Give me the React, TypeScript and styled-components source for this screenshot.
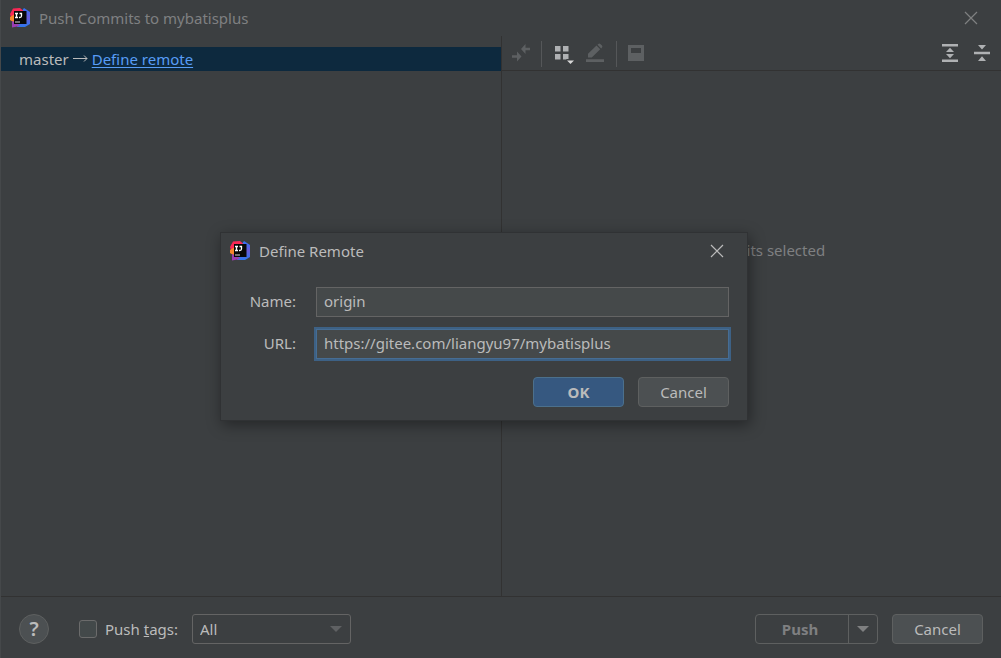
import React, { useId, useState } from "react";
import styled, { createGlobalStyle, css } from "styled-components";

const color = {
  panel: "#3c3f41",
  line: "#323232",
  text: "#bbbbbb",
  muted: "#7f8081",
  control: "#4c5052",
  controlBorder: "#5e6060",
  field: "#45494a",
  fieldBorder: "#646464",
  selection: "#0d293e",
  link: "#589df6",
  primary: "#365880",
  primaryBorder: "#4c708c",
  focus: "#3d6185",
};

const GlobalStyle = createGlobalStyle`
  *, *::before, *::after { box-sizing: border-box; }
  body {
    margin: 0;
    background: ${color.panel};
    color: ${color.text};
    font: 15px/20px "Noto Sans", "Open Sans", sans-serif;
  }
  button, input, select { font: inherit; color: inherit; margin: 0; }
  svg { display: block; }
`;

const Window = styled.main`
  position: relative;
  display: flex;
  flex-direction: column;
  min-height: 100vh;
  border-left: 1px solid #45484a;
`;

const TitleBar = styled.header<{ $active?: boolean }>`
  display: flex;
  align-items: center;
  gap: 8px;
  height: 36px;
  padding: 0 19px 0 8px;
  color: ${(p) => (p.$active ? color.text : color.muted)};
`;

const Title = styled.h1`
  flex: 1;
  margin: 0;
  font-size: 15px;
  font-weight: 400;
`;

const CloseButton = styled.button`
  display: flex;
  padding: 4px;
  border: 0;
  background: none;
  color: inherit;
`;

const Panels = styled.div`
  flex: 1;
  display: grid;
  grid-template-columns: 1fr 1fr;
  border-bottom: 1px solid ${color.line};
`;

const CommitTree = styled.section`
  padding-top: 11px;
`;

const BranchRow = styled.div`
  display: flex;
  align-items: center;
  gap: 4px;
  height: 24px;
  padding-left: 18px;
  background: ${color.selection};
`;

const RemoteLink = styled.a`
  color: ${color.link};
  text-underline-offset: 2px;
`;

const Details = styled.section`
  display: flex;
  flex-direction: column;
  border-left: 1px solid ${color.line};
`;

const Toolbar = styled.div`
  display: flex;
  align-items: center;
  gap: 10px;
  height: 35px;
  padding: 1px 7px 0;
  border-bottom: 1px solid ${color.line};
`;

const ToolButton = styled.button`
  display: flex;
  padding: 0;
  border: 0;
  background: none;
  color: #afb1b3;
  &:disabled { color: #5d6062; }
`;

const Divider = styled.span`
  width: 1px;
  height: 26px;
  background: #555759;
`;

const Spacer = styled.span`
  flex: 1;
`;

const EmptyText = styled.p`
  margin: 0;
  padding-top: 169px;
  text-align: center;
  color: ${color.muted};
`;

const Footer = styled.footer`
  display: flex;
  align-items: center;
  gap: 14px;
  height: 61px;
  padding: 2px 18px 0;
`;

const HelpButton = styled.button`
  width: 30px;
  height: 30px;
  margin-right: 16px;
  padding: 0;
  border: 1px solid ${color.controlBorder};
  border-radius: 50%;
  background: ${color.control};
  font-size: 20px;
  font-weight: 600;
`;

const TagsOption = styled.div`
  display: flex;
  align-items: center;
  gap: 8px;
`;

const CheckBox = styled.input`
  appearance: none;
  width: 18px;
  height: 18px;
  border: 1px solid #6b6b6b;
  border-radius: 3px;
  background: #43494a;
  &:checked { background: ${color.primary}; }
`;

const SelectBox = styled.div`
  display: grid;
  align-items: center;
  width: 159px;
  border: 1px solid ${color.fieldBorder};
  border-radius: 3px;
  color: #5f6163;
  > * { grid-area: 1 / 1; }
  > svg { justify-self: end; margin-right: 8px; pointer-events: none; }
`;

const Select = styled.select`
  appearance: none;
  width: 100%;
  height: 28px;
  padding: 0 7px;
  border: 0;
  background: transparent;
  color: ${color.text};
`;

const buttonShape = css`
  height: 30px;
  padding: 0;
  border: 1px solid ${color.controlBorder};
  border-radius: 4px;
`;

const Button = styled.button<{ $primary?: boolean }>`
  ${buttonShape}
  width: 91px;
  background: ${(p) => (p.$primary ? color.primary : color.control)};
  border-color: ${(p) => (p.$primary ? color.primaryBorder : color.controlBorder)};
  font-weight: ${(p) => (p.$primary ? 700 : 400)};
  outline: 0;
`;

const SplitButton = styled.div`
  ${buttonShape}
  display: flex;
  width: 123px;
  color: ${color.muted};
`;

const SplitPart = styled.button<{ $menu?: boolean }>`
  display: flex;
  align-items: center;
  justify-content: center;
  flex: ${(p) => (p.$menu ? "0 0 29px" : "1")};
  padding: 0 ${(p) => (p.$menu ? 0 : 4)}px 0 0;
  border: 0;
  border-left: ${(p) => (p.$menu ? `1px solid ${color.controlBorder}` : "0")};
  background: none;
  font-weight: 700;
`;

const Dialog = styled.form`
  position: absolute;
  top: 232px;
  left: 219px;
  width: 528px;
  border: 1px solid #303234;
  background: ${color.panel};
  box-shadow: 2px 4px 14px rgba(0, 0, 0, 0.4);
`;

const Fields = styled.div`
  display: grid;
  grid-template-columns: 75px 1fr;
  align-items: center;
  gap: 12px 20px;
  padding: 18px 18px 0 0;
`;

const FieldLabel = styled.label`
  padding-bottom: 2px;
  text-align: right;
`;

const TextField = styled.input<{ $focused?: boolean }>`
  width: 100%;
  height: 30px;
  padding: 0 7px 2px;
  border: 1px solid ${(p) => (p.$focused ? "#466d94" : color.fieldBorder)};
  background: ${color.field};
  outline: 0;
  box-shadow: ${(p) => (p.$focused ? `0 0 0 2px ${color.focus}` : "none")};
`;

const Actions = styled.div`
  display: flex;
  justify-content: flex-end;
  gap: 14px;
  padding: 18px 18px 13px;
`;

function IdeaLogo() {
  const id = useId();
  return (
    <svg width="22" height="22" viewBox="0 0 22 22" aria-hidden="true">
      <defs>
        <linearGradient id={id} x1="0" y1="0" x2="0" y2="1">
          <stop offset="0" stopColor="#2f72f6" />
          <stop offset=".5" stopColor="#6a5bd8" />
          <stop offset="1" stopColor="#2d78ee" />
        </linearGradient>
      </defs>
      <path d="M12 5 15 1l6 4v12l-5 3H8z" fill={`url(#${id})`} />
      <path d="M1 7 4 1.500l7-.5 3.500 3-3 4-9 4z" fill="#fb2755" />
      <path d="m1 10 4-2.500v8L1 13z" fill="#f7872b" />
      <path d="m3 14 5 2 3 3-8 1.500z" fill="#9b3db1" />
      <path d="M5 4h12.500v13H5z" fill="#080808" />
      <path d="M6 6.500h3M7.500 6.500v4M6 10.500h3M10.500 6.500H13M12.500 6v3q0 1.500-2 1.500h-.5" stroke="#fff" strokeWidth="1.300" fill="none" />
      <path d="M6 15h5" stroke="#aaa" strokeWidth="1.300" />
    </svg>
  );
}

function CloseIcon() {
  return (
    <svg width="14" height="14" viewBox="0 0 14 14" stroke="currentColor" strokeWidth="1.2">
      <path d="m1 1 12 12M13 1 1 13" />
    </svg>
  );
}

function DownArrow() {
  return (
    <svg width="12" height="8" viewBox="0 0 12 8" fill="currentColor" aria-hidden="true">
      <path d="M0 1h12L6 7z" />
    </svg>
  );
}

const toolShapes = {
  compare: <path d="M3 12.200h5V8.500l4.500 5-4.500 5v-3.700H3zM21 4.700h-4.500V1L12 6l4.500 5V7.300H21z" />,
  group: (
    <>
      <path d="M3 3h5.500v5.500H3zM11 3h5.500v5.500H11zM3 11h5.500v5.500H3zM11 11h5.500v5.500H11z" />
      <path d="M14 16h9l-4.500 6z" fill="#3c3f41" />
      <path d="M15 17.500h7L18.500 21z" fill="#d8d8d8" />
    </>
  ),
  edit: <path d="M2 16.300h18V19H2zM4 14.500v-3.700l8.500-8.300 3.700 3.700-8.400 8.300zM13.500 1.700l.8-.8q1-.7 2 0l1.700 1.700q.8 1 0 1.900l-.8.900z" />,
  preview: <path fillRule="evenodd" d="M1 2h16v16H1zM4 5v5h10V5z" />,
  expand: <path d="M2 1h16v2.600H2zM2 16.400h16V19H2zM10 4.700l4 4.300H6zM6 11h8l-4 4.300z" />,
  collapse: <path d="M2 8.700h16v2.600H2zM6 2h8l-4 4.600zM10 13.200l4 4.800H6z" />,
};

function Tool({ label, shape, disabled }: { label: string; shape: keyof typeof toolShapes; disabled?: boolean }) {
  return (
    <ToolButton type="button" aria-label={label} disabled={disabled}>
      <svg width="22" height="22" viewBox="0 0 22 22" fill="currentColor">{toolShapes[shape]}</svg>
    </ToolButton>
  );
}

export default function App() {
  const [name, setName] = useState("origin");
  const [url, setUrl] = useState("https://gitee.com/liangyu97/mybatisplus");

  return (
    <>
      <GlobalStyle />
      <Window>
        <TitleBar>
          <IdeaLogo />
          <Title>Push Commits to mybatisplus</Title>
          <CloseButton type="button" aria-label="Close"><CloseIcon /></CloseButton>
        </TitleBar>

        <Panels>
          <CommitTree>
            <BranchRow>
              <span>master</span>
              <svg width="15" height="10" viewBox="0 0 15 10" fill="none" stroke="#bbbbbb" aria-label="to">
                <path d="M0 4.500h14M11 1.500l3 3-3 3" />
              </svg>
              <RemoteLink href="#define-remote">Define remote</RemoteLink>
            </BranchRow>
          </CommitTree>
          <Details>
            <Toolbar>
              <Tool label="Show diff" shape="compare" disabled />
              <Divider />
              <Tool label="Group by" shape="group" />
              <Tool label="Edit source" shape="edit" disabled />
              <Divider />
              <Tool label="Preview" shape="preview" disabled />
              <Spacer />
              <Tool label="Expand all" shape="expand" />
              <Tool label="Collapse all" shape="collapse" />
            </Toolbar>
            <EmptyText>No commits selected</EmptyText>
          </Details>
        </Panels>

        <Footer>
          <HelpButton type="button" aria-label="Help">?</HelpButton>
          <TagsOption>
            <CheckBox id="push-tags" type="checkbox" />
            <label htmlFor="push-tags">Push <u>t</u>ags:</label>
          </TagsOption>
          <SelectBox>
            <Select aria-label="Tags to push" defaultValue="All">
              <option>All</option>
              <option>Current Branch</option>
            </Select>
            <DownArrow />
          </SelectBox>
          <Spacer />
          <SplitButton>
            <SplitPart type="button" disabled>Push</SplitPart>
            <SplitPart type="button" $menu aria-label="More push options"><DownArrow /></SplitPart>
          </SplitButton>
          <Button type="button">Cancel</Button>
        </Footer>

        <Dialog id="define-remote" role="dialog" aria-label="Define Remote" onSubmit={(e) => e.preventDefault()}>
          <TitleBar as="div" $active>
            <IdeaLogo />
            <Title as="h2">Define Remote</Title>
            <CloseButton type="button" aria-label="Close dialog"><CloseIcon /></CloseButton>
          </TitleBar>
          <Fields>
            <FieldLabel htmlFor="remote-name">Name:</FieldLabel>
            <TextField id="remote-name" value={name} onChange={(e) => setName(e.target.value)} />
            <FieldLabel htmlFor="remote-url">URL:</FieldLabel>
            <TextField id="remote-url" $focused value={url} onChange={(e) => setUrl(e.target.value)} />
          </Fields>
          <Actions>
            <Button type="submit" $primary>OK</Button>
            <Button type="button">Cancel</Button>
          </Actions>
        </Dialog>
      </Window>
    </>
  );
}
